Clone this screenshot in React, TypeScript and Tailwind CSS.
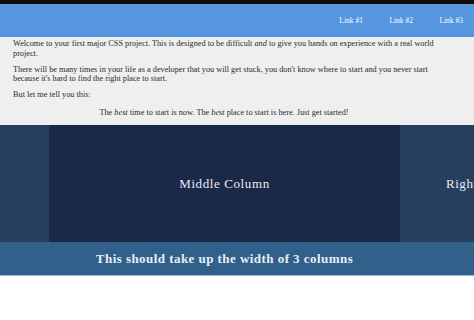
export default function App() {
  const serif = { fontFamily: '"Liberation Serif", "Times New Roman", serif' }
  return (
    <div className="w-[474px] h-[320px] overflow-hidden bg-white" style={serif}>
      <div className="h-[4px] bg-[#0b0b0b]" />
      <nav className="flex h-[33px] items-center justify-end gap-[26.5px] bg-[#5596df] pr-[11px] text-[7.5px] text-white">
        <a>Link #1</a>
        <a>Link #2</a>
        <a>Link #3</a>
      </nav>
      <section className="h-[88px] bg-[#efefef] pl-[13px] pr-[36px] pt-[2px] text-[8.25px] leading-[9.8px] text-[#2a2a2a]">
        <p>
          Welcome to your first major CSS project. This is designed to be difficult <em>and</em> to give you hands on experience with a real world project.
        </p>
        <p className="mt-[6px]">
          There will be many times in your life as a developer that you will get stuck, you don't know where to start and you never start because it's hard to find the right place to start.
        </p>
        <p className="mt-[6px]">But let me tell you this:</p>
        <p className="mt-[8px] pr-[3px] text-center">
          The <em>best</em> time to start is now. The <em>best</em> place to start is here. Just get started!
        </p>
      </section>
      <div className="flex h-[117px] w-[573px] text-[13px] tracking-[0.6px] text-[#e8ecf4]">
        <div className="w-[49px] shrink-0 bg-[#263f5e]" />
        <div className="flex w-[351px] shrink-0 items-center justify-center bg-[#1c2848] pt-[1px]">Middle Column</div>
        <div className="flex w-[173px] shrink-0 items-center justify-center bg-[#263f5e] pt-[1px]">Right Column</div>
      </div>
      <footer className="flex h-[34px] items-center justify-center border-b border-[#9fb4c8] bg-[#31608a] pr-[25px] text-[13px] font-semibold tracking-[0.45px] text-[#e8eef6]">
        This should take up the width of 3 columns
      </footer>
    </div>
  )
}
